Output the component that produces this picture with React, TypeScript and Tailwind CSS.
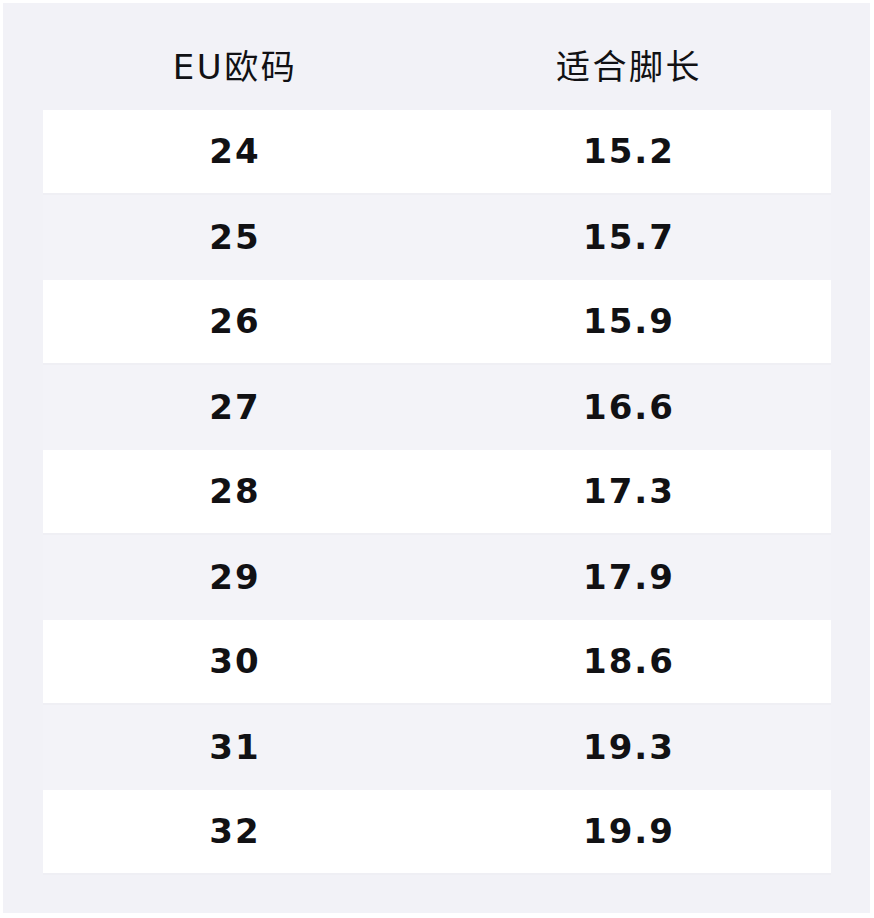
const rows: [string, string][] = [
  ["24", "15.2"],
  ["25", "15.7"],
  ["26", "15.9"],
  ["27", "16.6"],
  ["28", "17.3"],
  ["29", "17.9"],
  ["30", "18.6"],
  ["31", "19.3"],
  ["32", "19.9"],
];

export default function App() {
  return (
    <div className="bg-white p-[3px] w-[874px] h-[918px] font-['DejaVu_Sans','Noto_Sans_CJK_SC',sans-serif] text-[#111114]">
      <div className="w-[867px] h-[910px] bg-[#f2f2f7] pl-10 pr-[39px]">
        <div className="grid grid-cols-2 h-[107px] items-center pt-[21px] text-[34px] tracking-[2.5px]">
          <div className="text-center pr-[10px]">EU欧码</div>
          <div className="text-center pr-[10px]">适合脚长</div>
        </div>
        {rows.map(([eu, len], i) => (
          <div
            key={eu}
            className={
              i % 2 === 0
                ? "grid grid-cols-2 h-[85px] items-center bg-white border-b-2 border-[#efeff4] text-[34px] font-bold tracking-[2px]"
                : "grid grid-cols-2 h-[85px] items-center bg-[#f3f3f8] text-[34px] font-bold tracking-[2px]"
            }
          >
            <div className="text-center pr-[10px]">{eu}</div>
            <div className="text-center pr-[10px]">{len}</div>
          </div>
        ))}
      </div>
    </div>
  );
}
